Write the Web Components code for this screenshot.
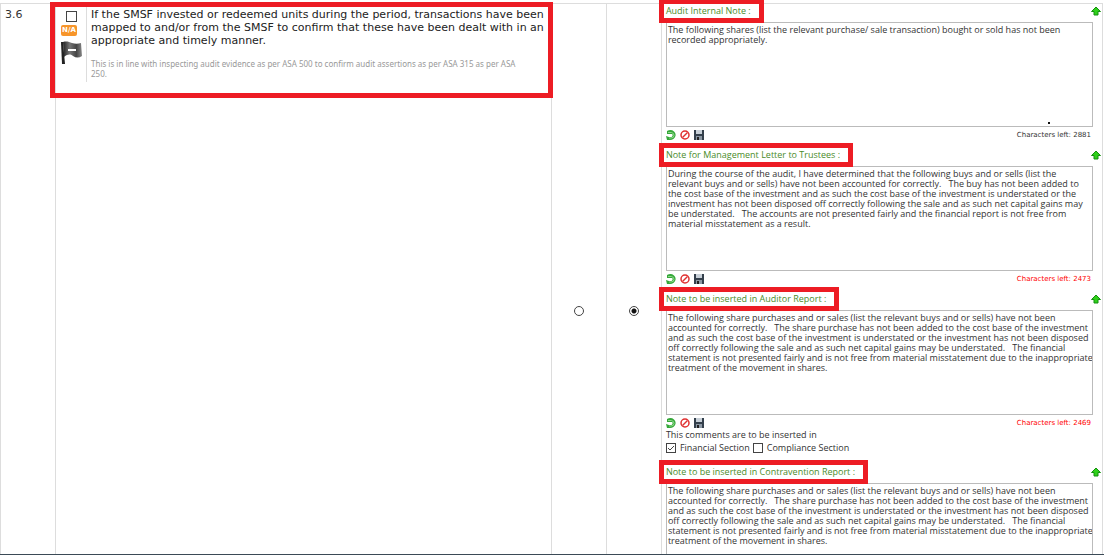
<!DOCTYPE html>
<html lang="en">
<head>
<meta charset="utf-8">
<title>Audit checklist</title>
<style>
  body { margin: 0; background: #fff; color: #333; font-family: "Open Sans", Verdana, sans-serif; }
</style>
</head>
<body>
<audit-page></audit-page>

<template id="audit-page">
  <style>
    :host { display: block; box-sizing: border-box; height: 100vh; overflow: hidden; padding: 3px 1px 0 0; border-bottom: 1px solid #3b4a56; }
    table { width: 100%; border-collapse: separate; border-spacing: 0; table-layout: fixed; border-right: 1px solid #ddd; }
    td { padding: 0; vertical-align: top; border-top: 1px solid #ddd; border-left: 1px solid #ddd; }
    .num { width: 54px; }
    .pick { width: 54px; vertical-align: middle; text-align: center; }
    .notes { padding: 1px 1px 17px 4px; }
    .num span { display: block; padding: 4px; font: 11px/14px "DejaVu Sans", sans-serif; }
    .question { width: 45%; box-sizing: border-box; padding: 3px 3px 0 0; }
    input[type=radio] { appearance: none; display: inline-block; box-sizing: border-box; width: 10px; height: 10px; margin: 0; border: 1px solid #444; border-radius: 50%; background: #fff; vertical-align: middle; }
    input[type=radio]:checked { background: radial-gradient(circle, #111 0 2px, #fff 3px); }
  </style>
  <table>
    <tr>
      <td class="num"><span>3.6</span></td>
      <td class="question">
        <audit-question>
          If the SMSF invested or redeemed units during the period, transactions have been<br>mapped to and/or from the SMSF to confirm that these have been dealt with in an<br>appropriate and timely manner.
          <span slot="hint">This is in line with inspecting audit evidence as per ASA 500 to confirm audit assertions as per ASA 315 as per ASA<br>250.</span>
        </audit-question>
      </td>
      <td class="pick"><input type="radio" name="result" aria-label="Yes"></td>
      <td class="pick"><input type="radio" name="result" aria-label="No" checked></td>
      <td class="notes">
        <audit-note label="Audit Internal Note :" left="2881" dotted>The following shares (list the relevant purchase/ sale transaction) bought or sold has not been
recorded appropriately.</audit-note>
        <audit-note label="Note for Management Letter to Trustees :" left="2473" low>During the course of the audit, I have determined that the following buys and or sells (list the
relevant buys and or sells) have not been accounted for correctly. &nbsp; The buy has not been added to
the cost base of the investment and as such the cost base of the investment is understated or the
investment has not been disposed off correctly following the sale and as such net capital gains may
be understated. &nbsp; The accounts are not presented fairly and the financial report is not free from
material misstatement as a result.</audit-note>
        <audit-note label="Note to be inserted in Auditor Report :" left="2469" low>The following share purchases and or sales (list the relevant buys and or sells) have not been
accounted for correctly. &nbsp; The share purchase has not been added to the cost base of the investment
and as such the cost base of the investment is understated or the investment has not been disposed
off correctly following the sale and as such net capital gains may be understated. &nbsp; The financial
statement is not presented fairly and is not free from material misstatement due to the inappropriate
treatment of the movement in shares.</audit-note>
        <report-sections></report-sections>
        <audit-note label="Note to be inserted in Contravention Report :">The following share purchases and or sales (list the relevant buys and or sells) have not been
accounted for correctly. &nbsp; The share purchase has not been added to the cost base of the investment
and as such the cost base of the investment is understated or the investment has not been disposed
off correctly following the sale and as such net capital gains may be understated. &nbsp; The financial
statement is not presented fairly and is not free from material misstatement due to the inappropriate
treatment of the movement in shares.</audit-note>
      </td>
    </tr>
  </table>
</template>

<template id="audit-question">
  <style>
    :host { display: flex; gap: 4px; height: 78px; margin-left: -1px; padding: 0 0 8px 6px; outline: 5px solid #ed1c24; }
    .tools { flex: none; display: flex; flex-direction: column; align-items: flex-start; width: 25px; height: 75px; border-right: 1px solid #ddd; }
    input { appearance: none; box-sizing: border-box; width: 11px; height: 11px; margin: 4px 0 3px 5px; border: 1px solid #444; background: #fff; }
    .na { margin: 0 0 5px; padding: 0; border: 0; border-radius: 2px; width: 16px; height: 11px; background: #f7952a; color: #fff; font: bold 7px/11px "DejaVu Sans", sans-serif; text-align: center; }
    .text { font: 11px/13px "DejaVu Sans", sans-serif; padding-top: 1px; white-space: nowrap; color: #222; }
    .hint { padding-top: 12px; font: 8px/10px "Noto Sans", sans-serif; color: #999; }
  </style>
  <div class="tools">
    <input type="checkbox" aria-label="Select item">
    <button class="na">N/A</button>
    <svg width="22" height="24" viewBox="0 0 22 24" aria-hidden="true">
      <defs>
        <linearGradient id="cloth"><stop offset="0" stop-color="#222"/><stop offset=".35" stop-color="#777"/><stop offset=".7" stop-color="#444"/><stop offset="1" stop-color="#888"/></linearGradient>
      </defs>
      <path d="M0 1h2l2 22H1z" fill="#222"/>
      <path d="M2 1c4-1 6 0 9 1s6 1 9 0l1 13c-3 2-6 2-9 0s-5-2-9 1z" fill="url(#cloth)"/>
      <path d="M7 8h8v2H7z" fill="#fff"/>
    </svg>
  </div>
  <div class="text"><slot></slot><div class="hint"><slot name="hint"></slot></div></div>
</template>

<template id="audit-note">
  <style>
    :host { display: block; position: relative; padding-bottom: 9px; font-size: 9px; }
    header { display: flex; justify-content: space-between; height: 12px; margin-bottom: 5px; line-height: 12px; }
    label { color: #4a8c2a; outline: 5px solid #ed1c24; height: 12px; margin: -1px 0 0 -2px; padding: 1px 8px 1px 2px; z-index: 1; }
    button { display: block; padding: 0; border: 0; background: none; width: 10px; height: 10px; }
    svg { display: block; width: 10px; height: 10px; }
    header button { margin-top: 1px; }
    textarea { display: block; box-sizing: border-box; width: calc(100% - 8px); height: 105px; margin: 0; padding: 2px 1px; border: 1px solid #bbb; resize: none; overflow: hidden; white-space: pre; font: inherit; line-height: 10px; color: #333; background: #fff; }
    footer { display: flex; gap: 4px; height: 10px; margin: 3px 10px 0 0; }
    :host(:not([left])) footer { display: none; }
    output { margin-left: auto; font: 7px/10px "DejaVu Sans", sans-serif; }
    :host([low]) output { color: #f00; }
    .dot { display: none; position: absolute; right: 51px; bottom: 25px; width: 2px; height: 2px; background: #111; }
    :host([dotted]) .dot { display: block; }
  </style>
  <header>
    <label for="note"></label>
    <button aria-label="Move up"><svg viewBox="0 0 10 10"><path d="M5 1 9.500 5.500H7V9H3V5.500H.5z" fill="#2fd01a" stroke="#159010"/></svg></button>
  </header>
  <textarea id="note"></textarea>
  <footer>
    <button aria-label="Refresh"><svg viewBox="0 0 10 10"><path d="M1 1Q5-1 8 1.500 10 3 9.500 6 8 10 4 10H1L0 6l3 1h2.500Q7 6 6.500 4.500L6 4H1z" fill="#35a83a"/><path d="M2 2.500h3.500Q8 3 8 5.500T5 8H3" fill="none" stroke="#8fd88a"/></svg></button>
    <button aria-label="Clear"><svg viewBox="0 0 10 10"><circle cx="5" cy="5" r="4" fill="#fff" stroke="#e03030" stroke-width="1.500"/><path d="m2.500 7.500 5-5" stroke="#e03030" stroke-width="1.500"/></svg></button>
    <button aria-label="Save"><svg viewBox="0 0 10 10"><path d="M0 0h10v10H0z" fill="#34404c"/><path d="M2 0h6v4H2z" fill="#c8d0d8"/><path d="M2 6h6v4H2z" fill="#8c98a4"/><path d="M3 7h2v3H3z" fill="#222"/></svg></button>
    <output></output>
  </footer>
  <span class="dot"></span>
</template>

<template id="report-sections">
  <style>
    :host { display: block; font-size: 9px; line-height: 12px; height: 30px; margin-top: -8px; margin-bottom: 7px; }
    .row { display: flex; align-items: center; gap: 3px; height: 13px; }
    label { display: flex; align-items: center; gap: 4px; }
    input { appearance: none; box-sizing: border-box; width: 10px; height: 10px; margin: 0; border: 1px solid #444; background: #fff; }
    input:checked { background: url("data:image/svg+xml,%3Csvg xmlns='http://www.w3.org/2000/svg' viewBox='0 0 8 8'%3E%3Cpath d='m1 4 2 2 4-4' fill='none' stroke='%23444'/%3E%3C/svg%3E") center / 8px 8px no-repeat; }
  </style>
  <div>This comments are to be inserted in</div>
  <div class="row">
    <label><input type="checkbox" checked>Financial Section</label>
    <label><input type="checkbox">Compliance Section</label>
  </div>
</template>

<script>
  class TemplateElement extends HTMLElement {
    constructor() {
      super();
      const template = document.getElementById(this.localName);
      this.attachShadow({ mode: "open" }).append(template.content.cloneNode(true));
    }
  }
  class AuditNote extends TemplateElement {
    connectedCallback() {
      const root = this.shadowRoot;
      root.querySelector("label").textContent = this.getAttribute("label");
      root.querySelector("textarea").value = this.textContent;
      if (this.hasAttribute("left")) {
        root.querySelector("output").textContent = "Characters left: " + this.getAttribute("left");
      }
    }
  }
  customElements.define("audit-note", AuditNote);
  customElements.define("audit-question", class extends TemplateElement {});
  customElements.define("report-sections", class extends TemplateElement {});
  customElements.define("audit-page", class extends TemplateElement {});
</script>
</body>
</html>
